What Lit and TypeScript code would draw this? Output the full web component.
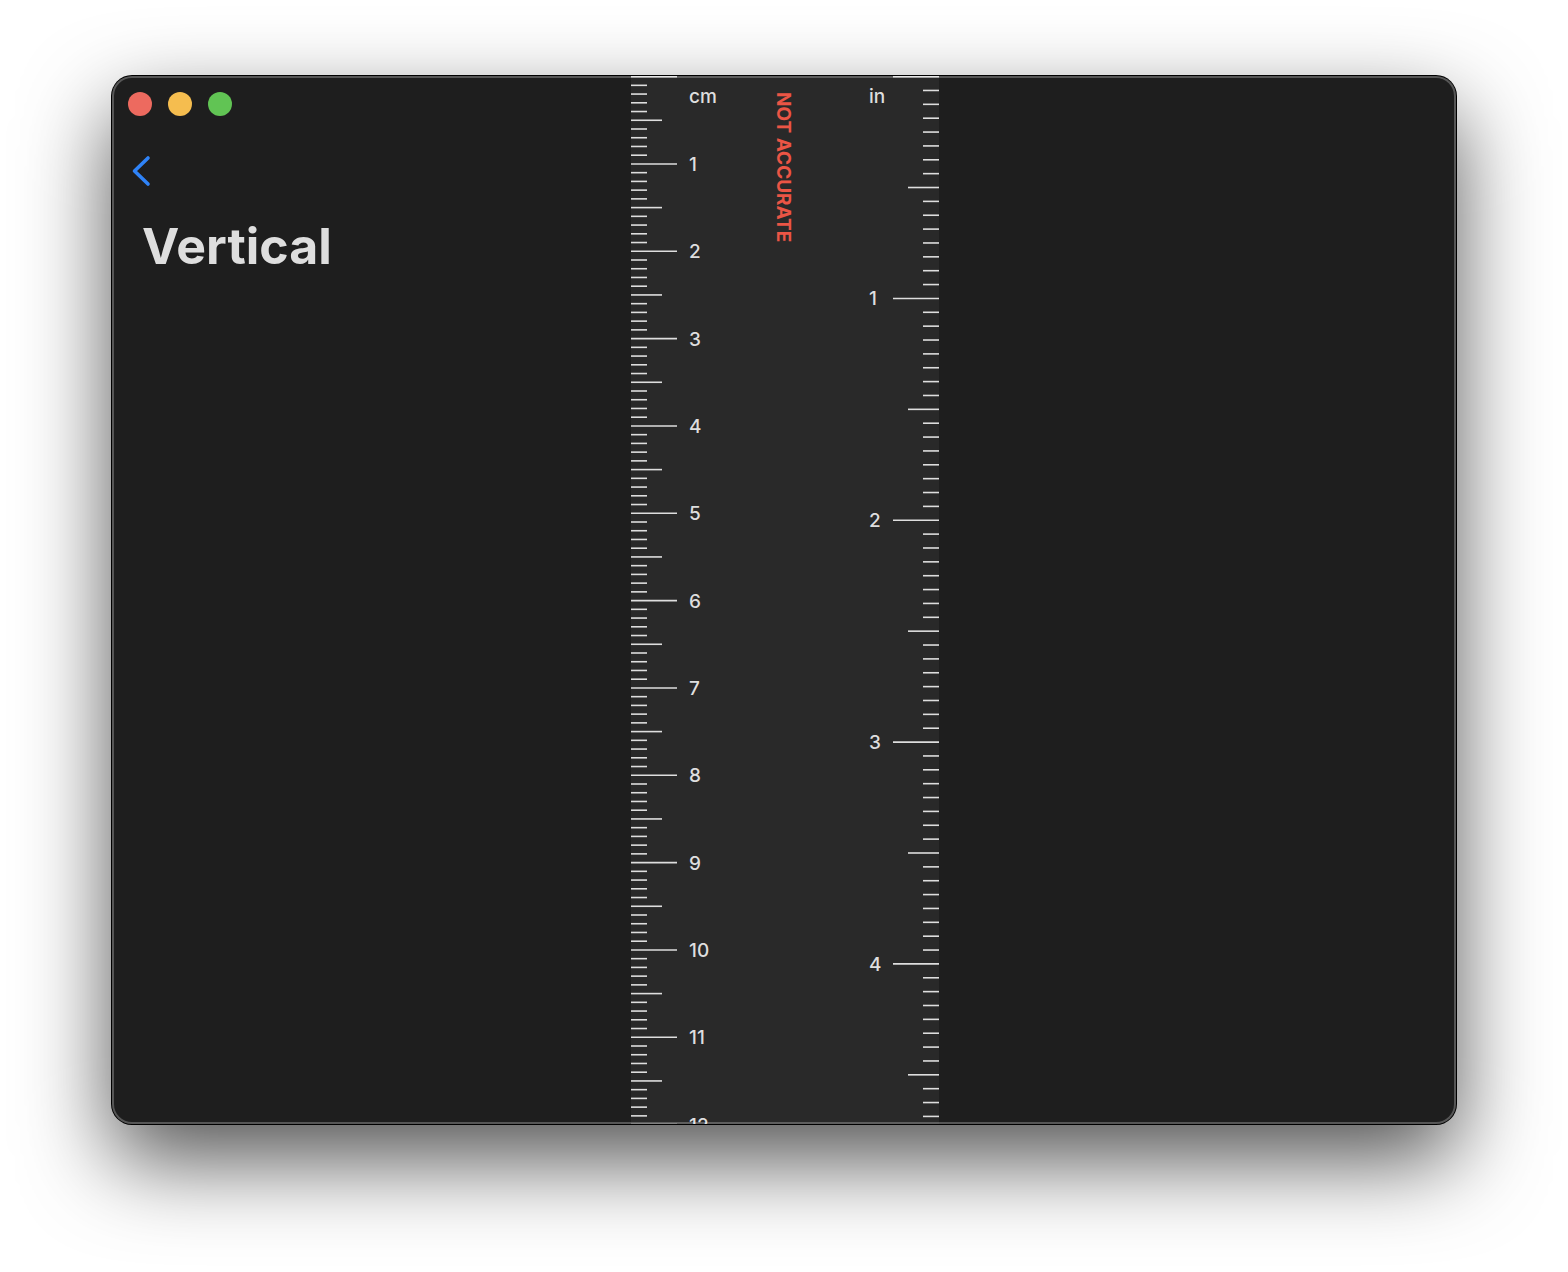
import { LitElement, html, svg, css } from "lit";
import { customElement } from "lit/decorators.js";

const RULER_WIDTH = 308;
const PX_PER_CM = 1048 / 12;
const PX_PER_INCH = PX_PER_CM * 2.54;
const ORIGIN = 0.6;
const TICK = { minor: 16, middle: 31, major: 46 };

type TickKind = keyof typeof TICK;

function kindOf(index: number, perUnit: number): TickKind {
  if (index % perUnit === 0) return "major";
  return index % (perUnit / 2) === 0 ? "middle" : "minor";
}

@customElement("ruler-scale")
export class RulerScale extends LitElement {
  static styles = css`
    :host {
      display: flex;
      background: #292929;
      overflow: hidden;
    }
    .scale {
      flex: 1;
      min-height: 100%;
      font: 500 19px/24px Inter, "Liberation Sans", sans-serif;
      fill: #dedede;
    }
    .tick {
      stroke: #dedede;
      stroke-width: 1.6;
    }
  `;

  private ticks(count: number, perUnit: number, unit: number, fromRight: boolean) {
    return Array.from({ length: count + 1 }, (_, i) => {
      const y = ORIGIN + (i * unit) / perUnit;
      const length = TICK[kindOf(i, perUnit)];
      const x1 = fromRight ? RULER_WIDTH - length : 0;
      return svg`<line class="tick" x1=${x1} x2=${x1 + length} y1=${y} y2=${y}></line>`;
    });
  }

  private numbers(count: number, unit: number, x: number) {
    return Array.from(
      { length: count },
      (_, i) => svg`<text x=${x} y=${Math.floor((i + 1) * unit) + 8}>${i + 1}</text>`
    );
  }

  render() {
    return html`
      <svg class="scale" width=${RULER_WIDTH} role="img" aria-label="Ruler">
        ${this.ticks(120, 10, PX_PER_CM, false)}
        ${this.ticks(75, 16, PX_PER_INCH, true)}
        <text x="58" y="27">cm</text>
        <text x="238" y="27">in</text>
        ${this.numbers(12, PX_PER_CM, 58)}
        ${this.numbers(4, PX_PER_INCH, 238)}
      </svg>
    `;
  }
}

@customElement("app-root")
export class AppRoot extends LitElement {
  static styles = css`
    :host {
      display: flex;
      box-sizing: border-box;
      min-height: 100vh;
      padding: 76px 112px 148px;
      overflow: hidden;
      background: #fff;
      font-family: Inter, "Liberation Sans", sans-serif;
    }
    .window {
      position: relative;
      flex: 1;
      display: grid;
      grid-template-columns: minmax(0, 1fr) auto minmax(0, 1fr);
      padding-left: 2px;
      border-radius: 20px;
      background: #1e1e1e;
      box-shadow: 0 0 0 1px #000, 0 36px 88px rgba(0, 0, 0, 0.68);
    }
    .window::after {
      content: "";
      position: absolute;
      inset: 0;
      border-radius: 20px;
      box-shadow: inset 0 0 0 2px rgba(255, 255, 255, 0.25);
      pointer-events: none;
    }
    .side {
      padding: 16px 14px;
    }
    .lights {
      display: flex;
      gap: 16px;
    }
    .light {
      width: 24px;
      height: 24px;
      padding: 0;
      border: 0;
      border-radius: 50%;
    }
    .close {
      background: #ed6a5f;
    }
    .minimise {
      background: #f5bd4f;
    }
    .zoom {
      background: #61c454;
    }
    .back {
      display: block;
      margin-top: 36px;
      padding: 0;
      border: 0;
      background: none;
    }
    .chevron {
      display: block;
      fill: none;
      stroke: #2f83f7;
      stroke-width: 3.6;
      stroke-linecap: round;
      stroke-linejoin: round;
    }
    .title {
      margin: 24px 0 0 14px;
      color: #dedede;
      font-size: 50px;
      line-height: 64px;
      font-weight: 700;
    }
    .ruler {
      display: grid;
      overflow: hidden;
    }
    .scale,
    .notice {
      grid-area: 1 / 1;
    }
    .notice {
      margin: 16px 4px 0 0;
      justify-self: center;
      align-self: start;
      writing-mode: vertical-rl;
      color: #eb5545;
      font-size: 19px;
      line-height: 24px;
      font-weight: 700;
      white-space: nowrap;
    }
  `;

  render() {
    return html`
      <main class="window">
        <section class="side">
          <div class="lights">
            <button class="light close" aria-label="Close"></button>
            <button class="light minimise" aria-label="Minimise"></button>
            <button class="light zoom" aria-label="Zoom"></button>
          </div>
          <button class="back" aria-label="Back">
            <svg class="chevron" width="28" height="38" viewBox="0 0 28 38">
              <path d="M20 6 L6.5 19 L20 32"></path>
            </svg>
          </button>
          <h1 class="title">Vertical</h1>
        </section>
        <section class="ruler">
          <ruler-scale class="scale"></ruler-scale>
          <p class="notice">NOT ACCURATE</p>
        </section>
      </main>
    `;
  }
}
